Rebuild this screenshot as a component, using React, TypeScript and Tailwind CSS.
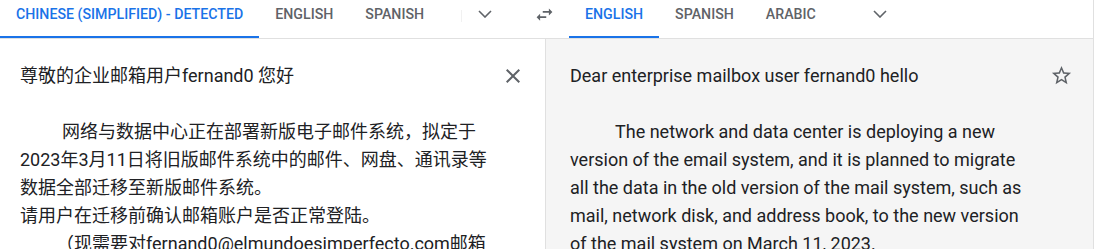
import React from "react";

const sourceTabs = [
    { name: "Chinese (Simplified) - detected", active: true },
    { name: "English" },
    { name: "Spanish" },
];

const targetTabs = [
    { name: "English", active: true },
    { name: "Spanish" },
    { name: "Arabic" },
];

const Tab = ({ name, active }: { name: string; active?: boolean }) => (
    <div
        className={
            active
                ? "h-[38px] px-4 pt-[6px] border-b-2 border-[#1a73e8] text-[#1a73e8] uppercase text-[14.2px] leading-[16px] font-medium whitespace-nowrap"
                : "h-[38px] px-4 pt-[6px] border-b-2 border-transparent text-[#5f6368] uppercase text-[14.2px] leading-[16px] font-medium whitespace-nowrap"
        }
    >
        {name}
    </div>
);

const Chevron = () => (
    <svg width="14" height="8" viewBox="0 0 14 8" fill="none">
        <polyline points="1,1 7,7 13,1" stroke="#5f6368" strokeWidth="1.6" />
    </svg>
);

const App: React.FC = () => {
    return (
        <div className="w-[1094px] h-[249px] overflow-hidden border-r border-[#e0e0e0] bg-white font-[Roboto,'Noto_Sans_CJK_SC',sans-serif] text-[#202124]">
            {/* language bar */}
            <div className="flex h-[39px] border-b border-[#e0e0e0]">
                <div className="flex w-[534px]">
                    {sourceTabs.map((t, i) => (
                        <Tab key={i} name={t.name} active={t.active} />
                    ))}
                    <div className="flex-1" />
                    <div className="mt-[10px] w-px h-[12px] bg-[#f1f1f1]" />
                    <div className="ml-4 pt-[10px] pr-[42px]">
                        <Chevron />
                    </div>
                </div>
                <div className="pt-[4px]">
                    <svg width="21" height="21" viewBox="0 0 24 24" fill="#5f6368">
                        <path d="M6.99 11L3 15l3.99 4v-3H14v-2H6.99v-3zM21 9l-3.99-4v3H10v2h7.01v3L21 9z" />
                    </svg>
                </div>
                <div className="flex ml-[14px]">
                    {targetTabs.map((t, i) => (
                        <Tab key={i} name={t.name} active={t.active} />
                    ))}
                    <div className="ml-[41px] pt-[10px]">
                        <Chevron />
                    </div>
                </div>
            </div>

            {/* text panels */}
            <div className="flex h-[210px]">
                <div className="w-[546px] flex pl-5 pt-[23px] border-r border-[#e0e0e0]">
                    <div className="w-[470px] text-[18px] leading-[28px]">
                        <p>尊敬的企业邮箱用户fernand0 您好</p>
                        <p>&nbsp;</p>
                        <p className="indent-[42px]">
                            网络与数据中心正在部署新版电子邮件系统，拟定于2023年3月11日将旧版邮件系统中的邮件、网盘、通讯录等数据全部迁移至新版邮件系统。
                        </p>
                        <p>请用户在迁移前确认邮箱账户是否正常登陆。</p>
                        <p className="indent-[36px]">（现需要对fernand0@elmundoesimperfecto.com邮箱账户进行迁移确认）</p>
                    </div>
                    <div className="ml-[11px] pt-[2px]">
                        <svg width="24" height="24" viewBox="0 0 24 24" fill="#5f6368">
                            <path d="M19 6.41L17.59 5 12 10.59 6.41 5 5 6.41 10.59 12 5 17.59 6.41 19 12 13.41 17.59 19 19 17.59 13.41 12z" />
                        </svg>
                    </div>
                </div>
                <div className="flex-1 flex bg-[#f5f5f5] pl-6 pt-[23px]">
                    <div className="w-[460px] text-[18px] leading-[28px]">
                        <p>Dear enterprise mailbox user fernand0 hello</p>
                        <p>&nbsp;</p>
                        <p className="indent-[45px]">
                            The network and data center is deploying a new version of the email system, and it is planned to migrate all the data in the old version of the mail system, such as mail, network disk, and address book, to the new version of the mail system on March 11, 2023.
                        </p>
                    </div>
                    <div className="ml-5 pt-[2px]">
                        <svg width="23" height="23" viewBox="0 0 24 24" fill="#5f6368">
                            <path d="M22 9.24l-7.19-.62L12 2 9.19 8.63 2 9.24l5.46 4.73L5.82 21 12 17.27 18.18 21l-1.63-7.03L22 9.24zM12 15.4l-3.76 2.27 1-4.28-3.32-2.88 4.38-.38L12 6.1l1.71 4.04 4.38.38-3.32 2.88 1 4.28L12 15.4z" />
                        </svg>
                    </div>
                </div>
            </div>
        </div>
    );
};

export default App;
